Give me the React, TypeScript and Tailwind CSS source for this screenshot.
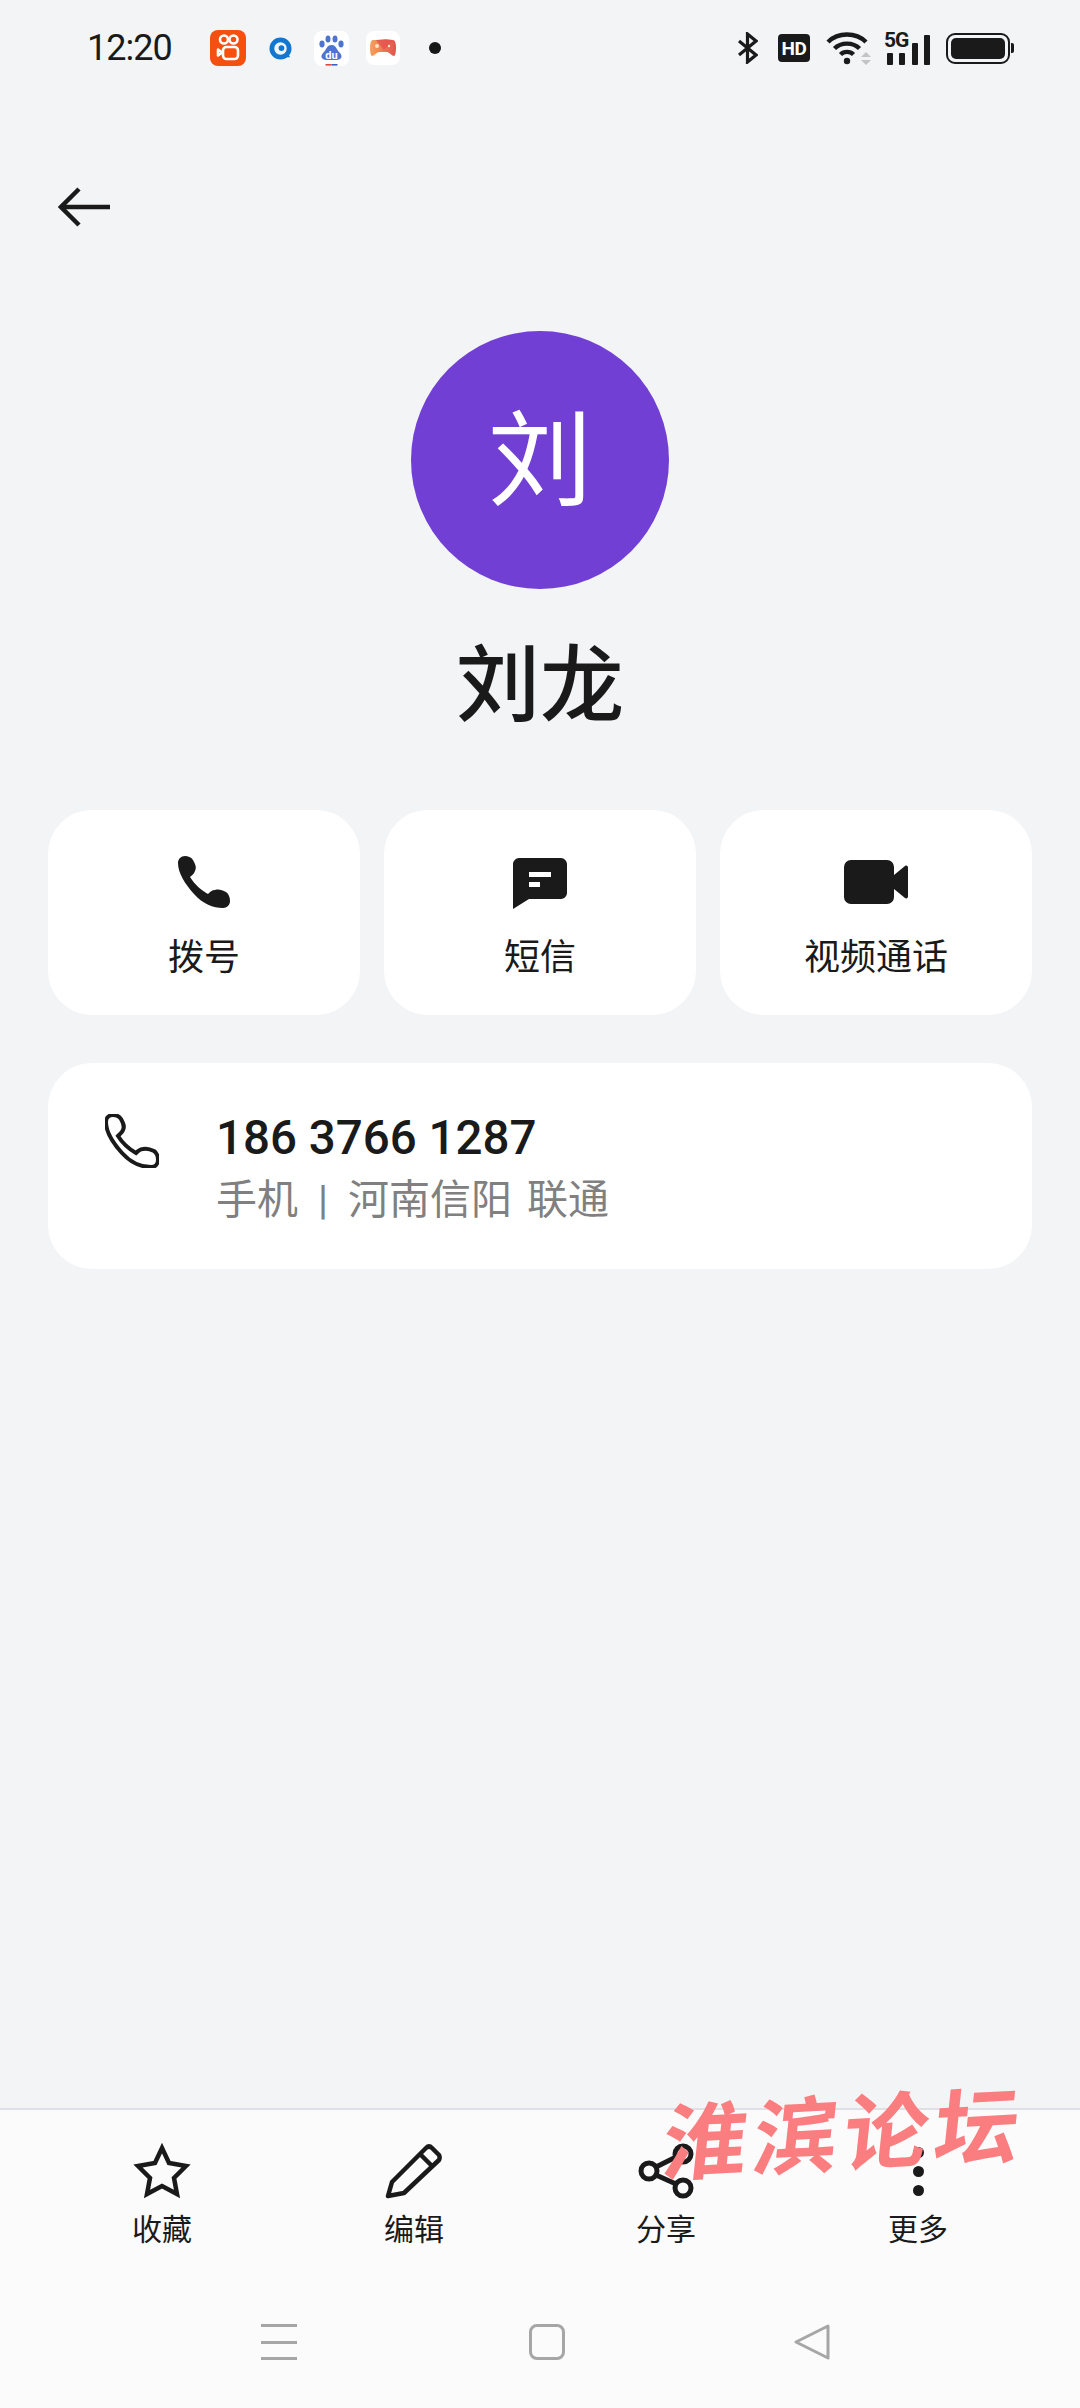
const FONT = "font-['Roboto','Noto_Sans_CJK_SC',sans-serif]"

const HANDSET =
  'M1 8C1 4 4 1 8 1C11 1 14 2 16 5C18 9 20 12 18 16C17 19 15 20 13 22C18 30 24 35 31 39C33 37 35 35 38 35C42 34 45 35 49 37C52 39 53 43 53 46C53 50 50 53 46 53C36 53 26 49 17 39C8 29 1 18 1 8Z'

function AppIcons() {
  return (
    <div className="flex items-center ml-[39px]">
      {/* kuaishou */}
      <svg width="36" height="36" viewBox="0 0 36 36" className="block">
        <rect width="36" height="36" rx="8" fill="#f5500f" />
        <g fill="none" stroke="#fff" strokeWidth="2.6">
          <circle cx="14" cy="9.5" r="4" />
          <circle cx="23.5" cy="9.5" r="4" />
          <rect x="13" y="17" width="15" height="12" rx="3.5" />
          <path d="M8 19.5 L12 22.5 L8 25.5Z" strokeLinejoin="round" />
        </g>
      </svg>
      {/* blue ring */}
      <svg width="23" height="23" viewBox="0 0 24 24" className="block ml-[23px]">
        <circle cx="12" cy="12" r="9" fill="none" stroke="#1277d3" strokeWidth="5" />
        <circle cx="13" cy="11.5" r="3" fill="#1277d3" />
        <path d="M14 21 L22 21 L19 15Z" fill="#1277d3" />
      </svg>
      {/* baidu */}
      <div className="relative ml-[22px] w-[35px] h-[35px] rounded-[8px] bg-white">
        <svg width="35" height="40" viewBox="0 0 35 40" className="block">
          <g fill="#4e74cf">
            <ellipse cx="8" cy="13" rx="2.6" ry="3.4" />
            <ellipse cx="14" cy="8" rx="2.5" ry="3.6" />
            <ellipse cx="21" cy="8" rx="2.5" ry="3.6" />
            <ellipse cx="27" cy="13" rx="2.6" ry="3.4" />
            <path d="M17.5 14C12.5 14 12.5 19 9 22C5.5 26 8.5 29 12.5 29H22.5C26.5 29 29.5 26 26 22C22.5 19 22.5 14 17.5 14Z" />
          </g>
          <text x="17.5" y="28" textAnchor="middle" fontSize="11" fontWeight="700" fill="#fff" fontFamily="Roboto">du</text>
          <rect x="11.5" y="33" width="6" height="1.6" fill="#e0483e" />
          <rect x="17.5" y="33" width="6" height="1.6" fill="#3d5fc4" />
        </svg>
      </div>
      {/* game */}
      <div className="ml-[17px] w-[34px] h-[34px] rounded-[8px] bg-white flex items-center justify-center">
        <svg width="26" height="20" viewBox="0 0 26 20" className="block">
          <defs>
            <linearGradient id="pad" x1="0" x2="1" y1="0" y2="0">
              <stop offset="0" stopColor="#f7a15c" />
              <stop offset="1" stopColor="#e3534f" />
            </linearGradient>
          </defs>
          <path d="M3 2H23C25 2 26 5 26 10C26 15 25 18 24 18C22 18 19 14 17 14H9C7 14 4 18 2 18C1 18 0 15 0 10C0 5 1 2 3 2Z" fill="url(#pad)" />
          <path d="M6 2L16 1L23 2L14 12Z" fill="#e3534f" opacity="0.8" />
          <circle cx="7" cy="8" r="2" fill="#fde6c8" />
          <circle cx="19" cy="8" r="1.2" fill="#fde6c8" />
        </svg>
      </div>
      <div className="ml-[29px] w-[12px] h-[12px] rounded-full bg-[#171717]" />
    </div>
  )
}

function SystemIcons() {
  return (
    <div className="flex items-center">
      <svg width="20" height="32" viewBox="0 0 20 32" className="block" fill="none" stroke="#1a1a1a" strokeWidth="3.2">
        <path d="M1 9L18 23L9.5 30V2L18 9L1 23" />
      </svg>
      <div className="ml-[20px] w-[32px] h-[28px] rounded-[4px] bg-[#1a1a1a] flex items-center justify-center text-white text-[19px] leading-none font-bold font-['Roboto',sans-serif] tracking-[-0.5px]">
        HD
      </div>
      <svg width="46" height="34" viewBox="0 0 46 34" className="block ml-[16px]">
        <g fill="none" stroke="#1a1a1a" strokeWidth="4.4">
          <path d="M2 11C12 1 30 1 40 11" />
          <path d="M8.5 17.5C15 11 27 11 33.5 17.5" />
          <path d="M14.5 23.5C18 20 24 20 27.5 23.5" />
        </g>
        <circle cx="21" cy="30" r="3.2" fill="#1a1a1a" />
        <path d="M35 26L40 21L45 26Z" fill="#c4c4c4" />
        <path d="M35 29L40 34L45 29Z" fill="#c4c4c4" />
      </svg>
      <div className="relative ml-[12px] w-[46px] h-[33px] pl-[3px] flex items-end gap-[6.5px]">
        <span className="absolute left-0 top-[-3px] text-[21px] leading-[22px] font-bold text-[#1a1a1a] font-['Roboto',sans-serif] tracking-[-1px]">5G</span>
        <div className="w-[6px] h-[12px] bg-[#1a1a1a] rounded-[1px]" />
        <div className="w-[6px] h-[12px] bg-[#1a1a1a] rounded-[1px]" />
        <div className="w-[6px] h-[22px] bg-[#1a1a1a] rounded-[1px]" />
        <div className="w-[6px] h-[30px] bg-[#1a1a1a] rounded-[1px]" />
      </div>
      <div className="ml-[16px] flex items-center">
        <div className="w-[64px] h-[31px] rounded-[9px] border-[2.5px] border-[#1a1a1a] p-[3px]">
          <div className="w-full h-full rounded-[5px] bg-[#1a1a1a]" />
        </div>
        <div className="ml-[1px] w-[3px] h-[10px] rounded-r-[2px] bg-[#1a1a1a]" />
      </div>
    </div>
  )
}

function ActionCard({ label, children }: { label: string; children: React.ReactNode }) {
  return (
    <div className="h-[205px] rounded-[44px] bg-white flex flex-col items-center pt-[45px]">
      <div className="h-[54px] flex items-center">{children}</div>
      <span className="mt-[27px] text-[36px] leading-[44px] text-[#1a1a1a]">{label}</span>
    </div>
  )
}

function BarItem({ label, children }: { label: string; children: React.ReactNode }) {
  return (
    <div className="flex flex-col items-center">
      <div className="h-[56px] flex items-center justify-center">{children}</div>
      <span className="mt-[13px] text-[30px] leading-[36px] text-[#1a1a1a]">{label}</span>
    </div>
  )
}

export default function App() {
  return (
    <div className={`relative w-[1080px] h-[2408px] overflow-hidden bg-[#f3f4f6] flex flex-col ${FONT}`}>
      <div className="h-[96px] flex items-center justify-between pl-[87px] pr-[66px]">
        <div className="flex items-center">
          <span className="text-[36px] leading-none tracking-[-1px] text-[#1a1a1a] w-[84px]">12:20</span>
          <AppIcons />
        </div>
        <SystemIcons />
      </div>

      <div className="pl-[58px] pt-[91px]">
        <svg width="52" height="40" viewBox="0 0 52 40" className="block" fill="none" stroke="#1a1a1a" strokeWidth="4.5">
          <path d="M52 20H3" />
          <path d="M21 2L3 20L21 38" />
        </svg>
      </div>

      <div className="flex flex-col items-center flex-1">
        <div className="mt-[104px] w-[258px] h-[258px] rounded-full bg-[#713fd4] flex items-center justify-center pt-[5px] text-white text-[104px] leading-none">
          刘
        </div>
        <h1 className="mt-[48px] text-[84px] leading-[100px] font-medium text-[#1a1a1a]">刘龙</h1>

        <div className="mt-[73px] w-[984px] grid grid-cols-3 gap-[24px]">
          <ActionCard label="拨号">
            <svg width="54" height="54" viewBox="0 0 54 54" className="block">
              <path d={HANDSET} fill="#1a1a1a" />
            </svg>
          </ActionCard>
          <ActionCard label="短信">
            <svg width="54" height="52" viewBox="0 0 54 52" className="block mt-[3px]">
              <path d="M6 0H48C51 0 54 3 54 6V35C54 38 51 41 48 41H16L0 51V6C0 3 3 0 6 0Z" fill="#1a1a1a" />
              <rect x="16" y="14" width="22" height="5" fill="#fff" />
              <rect x="16" y="24" width="11" height="5" fill="#fff" />
            </svg>
          </ActionCard>
          <ActionCard label="视频通话">
            <svg width="64" height="44" viewBox="0 0 64 44" className="block">
              <rect width="50" height="44" rx="7" fill="#1a1a1a" />
              <path d="M50 15L61 6C63 5 64 6 64 8V36C64 38 63 39 61 38L50 29Z" fill="#1a1a1a" />
            </svg>
          </ActionCard>
        </div>

        <div className="mt-[48px] w-[984px] h-[206px] rounded-[44px] bg-white flex items-start pl-[57px] pt-[51px]">
          <svg width="54" height="54" viewBox="0 0 54 54" className="block shrink-0">
            <path d={HANDSET} fill="none" stroke="#1a1a1a" strokeWidth="4" />
          </svg>
          <div className="ml-[57px] mt-[-3px]">
            <div className="text-[47.5px] leading-[54px] font-medium text-[#1a1a1a]">186 3766 1287</div>
            <div className="mt-[11px] text-[41px] leading-[48px] text-[#808080]">
              手机<span className="mx-[20px]">|</span>河南信阳<span className="ml-[15px]">联通</span>
            </div>
          </div>
        </div>
      </div>

      <div className="h-[300px] border-t-2 border-[#dfe0e3] bg-[#fbfbfb]">
        <div className="grid grid-cols-4 px-[36px] pt-[33px]">
          <BarItem label="收藏">
            <svg width="60" height="58" viewBox="0 0 60 58" className="block" fill="none" stroke="#1a1a1a" strokeWidth="4.5">
              <path d="M30 6L37 21L54 24L42 36L45 52L30 44L15 52L18 36L6 24L23 21Z" />
            </svg>
          </BarItem>
          <BarItem label="编辑">
            <svg width="58" height="56" viewBox="0 0 58 56" className="block" fill="none" stroke="#1a1a1a" strokeWidth="4.5" strokeLinejoin="round">
              <path d="M3 53L7 39L41 5C43 3 45 3 47 5L54 12C55 14 55 15 54 17L19 50Z" />
              <path d="M35 11L48 24" />
            </svg>
          </BarItem>
          <BarItem label="分享">
            <svg width="56" height="56" viewBox="0 0 56 56" className="block" fill="none" stroke="#1a1a1a" strokeWidth="5">
              <circle cx="45" cy="11" r="8" />
              <circle cx="11" cy="28" r="8" />
              <circle cx="45" cy="45" r="8" />
              <path d="M18 24L38 14" />
              <path d="M18 32L38 41" />
            </svg>
          </BarItem>
          <BarItem label="更多">
            <div className="flex flex-col items-center gap-[8px]">
              <div className="w-[11px] h-[11px] rounded-full bg-[#1a1a1a]" />
              <div className="w-[11px] h-[11px] rounded-full bg-[#1a1a1a]" />
              <div className="w-[11px] h-[11px] rounded-full bg-[#1a1a1a]" />
            </div>
          </BarItem>
        </div>

        <div className="mt-[76px] flex items-center pl-[261px]">
          <div className="w-[36px] h-[36px] flex flex-col justify-between">
            <div className="h-[3px] bg-[#a6a6a6]" />
            <div className="h-[3px] bg-[#a6a6a6]" />
            <div className="h-[3px] bg-[#a6a6a6]" />
          </div>
          <div className="ml-[232px] w-[36px] h-[36px] rounded-[8px] border-[3px] border-[#a6a6a6]" />
          <svg width="36" height="36" viewBox="0 0 36 36" className="block ml-[229px]" fill="none" stroke="#a6a6a6" strokeWidth="3" strokeLinejoin="round">
            <path d="M34 2L2 18L34 34Z" />
          </svg>
        </div>
      </div>

      {/* watermark */}
      <div className="absolute left-[664px] top-[2089px] flex gap-[6px] text-[84px] leading-[96px] font-bold text-[#fa7d80] -skew-x-6 -skew-y-3">
        <span>淮</span>
        <span>滨</span>
        <span>论</span>
        <span>坛</span>
      </div>
    </div>
  )
}
